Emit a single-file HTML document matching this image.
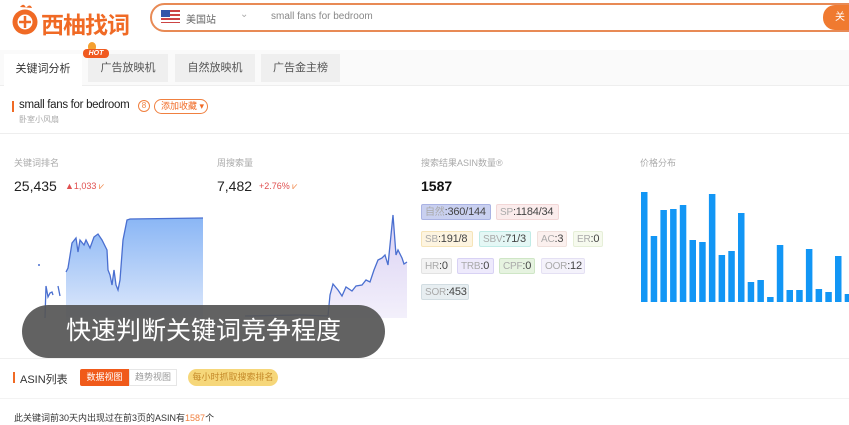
<!DOCTYPE html>
<html><head><meta charset="utf-8"><style>
*{margin:0;padding:0;box-sizing:border-box}
body{width:849px;height:425px;overflow:hidden;background:#fff;font-family:"Liberation Sans","Noto Sans CJK SC",sans-serif;position:relative;color:#333}
.a{position:absolute;white-space:nowrap}
.tag{position:absolute;height:16px;font-size:10px;line-height:14px;padding:0 3px;border-radius:2px;color:#555;white-space:nowrap;overflow:hidden;letter-spacing:-0.2px}
.tag b{font-weight:normal;color:#444;font-size:11px}
.tag span{color:#aaa}
</style></head><body>
<!-- header -->
<svg class="a" style="left:10px;top:2px" width="30" height="33" viewBox="0 0 30 33">
<path d="M10 5 Q14 0 16 6 Q20 1 22 6" fill="#f06a25"/>
<circle cx="15" cy="20" r="12.5" fill="#f06a25"/><circle cx="15" cy="20" r="7.5" fill="#fff"/>
<path d="M15 14v12M9 20h12" stroke="#f06a25" stroke-width="2.5"/></svg>
<div class="a" style="left:41px;top:6px;font-size:23px;font-weight:bold;color:#f06a25;letter-spacing:-1px">西柚找词</div>
<div class="a" style="left:150px;top:3px;width:720px;height:29px;border:2px solid #e88a55;border-radius:15px"></div>
<div class="a" style="left:161px;top:10px;width:19px;height:13px;background:repeating-linear-gradient(#c44 0 2px,#fff 2px 4px)"><div style="width:9px;height:7px;background:#35a"></div></div>
<div class="a" style="left:186px;top:11px;font-size:10px;color:#666">美国站</div>
<div class="a" style="left:240px;top:9px;font-size:10px;color:#aaa">⌄</div>
<div class="a" style="left:271px;top:11px;font-size:10px;color:#888">small fans for bedroom</div>
<div class="a" style="left:823px;top:5px;width:40px;height:25px;background:#f07a30;border-radius:12px;color:#fff;font-size:10px;line-height:25px;padding-left:12px">关</div>
<!-- tabs band -->
<div class="a" style="left:0;top:50px;width:849px;height:36px;background:#fafafa;border-bottom:1px solid #eee"></div>
<div class="a" style="left:4px;top:54px;width:78px;height:32px;background:#fff;font-size:11px;line-height:30px;text-align:center;color:#333">关键词分析</div>
<div class="a" style="left:88px;top:54px;width:80px;height:28px;background:#efefef;font-size:11px;line-height:28px;text-align:center;color:#555">广告放映机</div>
<div class="a" style="left:175px;top:54px;width:80px;height:28px;background:#efefef;font-size:11px;line-height:28px;text-align:center;color:#555">自然放映机</div>
<div class="a" style="left:261px;top:54px;width:79px;height:28px;background:#efefef;font-size:11px;line-height:28px;text-align:center;color:#555">广告金主榜</div>
<div class="a" style="left:88px;top:42px;width:8px;height:9px;background:#f5a030;border-radius:50% 50% 40% 40%"></div>
<div class="a" style="left:83px;top:49px;width:26px;height:9px;background:#f05a20;border-radius:4px;color:#fff;font-size:7px;font-style:italic;font-weight:bold;line-height:9px;text-align:center">HOT</div>
<!-- title -->
<div class="a" style="left:12px;top:101px;width:2px;height:11px;background:#f06a25"></div>
<div class="a" style="left:19px;top:99px;font-size:11.5px;color:#222;letter-spacing:-0.3px">small fans for bedroom</div>
<div class="a" style="left:138px;top:100px;width:12px;height:12px;border:1px solid #f08040;border-radius:50%;font-size:8px;color:#f08040;text-align:center;line-height:10px">8</div>
<div class="a" style="left:154px;top:99px;width:54px;height:15px;border:1px solid #f08040;border-radius:8px;font-size:9px;color:#f06a25;line-height:13px;padding-left:6px">添加收藏 ▾</div>
<div class="a" style="left:19px;top:114px;font-size:8px;color:#aaa">卧室小风扇</div>
<div class="a" style="left:0;top:133px;width:849px;height:1px;background:#eee"></div>
<!-- metrics -->
<div class="a" style="left:14px;top:156px;font-size:9px;color:#aaa">关键词排名</div>
<div class="a" style="left:14px;top:178px;font-size:14px;color:#222">25,435</div>
<div class="a" style="left:65px;top:181px;font-size:9px;color:#e05050">▲1,033 <span style="color:#f08040">⩗</span></div>
<div class="a" style="left:217px;top:156px;font-size:9px;color:#aaa">周搜索量</div>
<div class="a" style="left:217px;top:178px;font-size:14px;color:#222">7,482</div>
<div class="a" style="left:259px;top:181px;font-size:9px;color:#e05050">+2.76% <span style="color:#f08040">⩗</span></div>
<div class="a" style="left:421px;top:156px;font-size:9px;color:#aaa">搜索结果ASIN数量®</div>
<div class="a" style="left:421px;top:178px;font-size:14px;font-weight:bold;color:#111">1587</div>
<div class="a" style="left:640px;top:156px;font-size:9px;color:#aaa">价格分布</div>
<!-- charts -->
<svg class="a" style="left:0;top:0" width="849" height="425">
<defs><linearGradient id="g1" x1="0" y1="0" x2="0" y2="1"><stop offset="0" stop-color="#8ab6f5"/><stop offset="1" stop-color="#dfe9fb"/></linearGradient>
<linearGradient id="g2" x1="0" y1="0" x2="0" y2="1"><stop offset="0" stop-color="#d9d0f3"/><stop offset="1" stop-color="#f3f0fb"/></linearGradient></defs>
<path d="M66 272L68 268L72 243L76 238L78 252L80 240L84 245L86 240L90 248L94 237L98 234L102 240L107 250L108 270L110 275L112 285L114 270L116 285L118 290L120 280L123 240L127 220L130 219L203 218L203 320L66 320Z" fill="url(#g1)"/>
<polyline fill="none" stroke="#4a6fd0" stroke-width="1.3" points="66,272 68,268 72,243 76,238 78,252 80,240 84,245 86,240 90,248 94,237 98,234 102,240 107,250 108,270 110,275 112,285 114,270 116,285 118,290 120,280 123,240 127,220 130,219 203,218"/>
<polyline fill="none" stroke="#4a6fd0" stroke-width="1.3" points="45,318 46,286 48,297 50,293 52,292 53,295"/>
<polyline fill="none" stroke="#4a6fd0" stroke-width="1.3" points="58,286 60,296"/>
<circle cx="39" cy="265" r="1" fill="#4a6fd0"/>
<path d="M330 295L333 284L338 290L342 296L346 287L352 291L356 286L362 285L366 280L370 282L374 270L378 260L382 258L385 255L388 265L393 215L396 255L398 250L402 258L404 264L407 262L407 318L330 318Z" fill="url(#g2)"/>
<polyline fill="none" stroke="#4a6fd0" stroke-width="1.3" points="245,316 300,315 328,316 330,295 333,284 338,290 342,296 346,287 352,291 356,286 362,285 366,280 370,282 374,270 378,260 382,258 385,255 388,265 393,215 396,255 398,250 402,258 404,264 407,262"/>
<g fill="#1296f5">
<rect x="641" y="192" width="6.5" height="110"/><rect x="650.7" y="236" width="6.5" height="66"/><rect x="660.4" y="210" width="6.5" height="92"/><rect x="670.1" y="209" width="6.5" height="93"/><rect x="679.8" y="205" width="6.5" height="97"/><rect x="689.5" y="240" width="6.5" height="62"/><rect x="699.2" y="242" width="6.5" height="60"/><rect x="708.9" y="194" width="6.5" height="108"/><rect x="718.6" y="255" width="6.5" height="47"/><rect x="728.3" y="251" width="6.5" height="51"/><rect x="738" y="213" width="6.5" height="89"/><rect x="747.7" y="282" width="6.5" height="20"/><rect x="757.4" y="280" width="6.5" height="22"/><rect x="767.1" y="297" width="6.5" height="5"/><rect x="776.8" y="245" width="6.5" height="57"/><rect x="786.5" y="290" width="6.5" height="12"/><rect x="796.2" y="290" width="6.5" height="12"/><rect x="805.9" y="249" width="6.5" height="53"/><rect x="815.6" y="289" width="6.5" height="13"/><rect x="825.3" y="292" width="6.5" height="10"/><rect x="835" y="256" width="6.5" height="46"/><rect x="844.7" y="294" width="6.5" height="8"/>
</g></svg>
<!-- tags -->
<div class="tag" style="left:421px;top:204px;width:70px;background:#c9d0f0;border:1px solid #aab3e3"><span>自然</span><b>:360/144</b></div>
<div class="tag" style="left:496px;top:204px;width:63px;background:#fbecec;border:1px solid #f2d7d7"><span>SP</span><b>:1184/34</b></div>
<div class="tag" style="left:421px;top:231px;width:52px;background:#fdf4e0;border:1px solid #f6e4b8"><span>SB</span><b>:191/8</b></div>
<div class="tag" style="left:479px;top:231px;width:52px;background:#e4f7f5;border:1px solid #c0ebe6"><span>SBV</span><b>:71/3</b></div>
<div class="tag" style="left:537px;top:231px;width:30px;background:#fbf0ee;border:1px solid #f0e0dc"><span>AC</span><b>:3</b></div>
<div class="tag" style="left:573px;top:231px;width:30px;background:#f6faee;border:1px solid #e6efd8"><span>ER</span><b>:0</b></div>
<div class="tag" style="left:421px;top:258px;width:31px;background:#f3f3f3;border:1px solid #e2e2e2"><span>HR</span><b>:0</b></div>
<div class="tag" style="left:457px;top:258px;width:37px;background:#eeeafc;border:1px solid #d8d2f4"><span>TRB</span><b>:0</b></div>
<div class="tag" style="left:499px;top:258px;width:36px;background:#e6f3e0;border:1px solid #cfe6c6"><span>CPF</span><b>:0</b></div>
<div class="tag" style="left:541px;top:258px;width:44px;background:#f4f2fb;border:1px solid #e4e0f3"><span>OOR</span><b>:12</b></div>
<div class="tag" style="left:421px;top:284px;width:48px;background:#e7eef1;border:1px solid #d2dde2"><span>SOR</span><b>:453</b></div>
<!-- overlay caption -->
<div class="a" style="left:22px;top:305px;width:363px;height:53px;background:rgba(85,85,85,0.92);border-radius:27px;color:#fff;font-size:25px;line-height:53px;text-align:center">快速判断关键词竞争程度</div>
<div class="a" style="left:0;top:358px;width:849px;height:1px;background:#f0f0f0"></div>
<!-- asin -->
<div class="a" style="left:13px;top:372px;width:2px;height:11px;background:#f06a25"></div>
<div class="a" style="left:20px;top:371px;font-size:11px;color:#333">ASIN列表</div>
<div class="a" style="left:80px;top:369px;width:49px;height:17px;background:#f05a1a;color:#fff;font-size:9px;line-height:17px;text-align:center;border-radius:2px 0 0 2px">数据视图</div>
<div class="a" style="left:129px;top:369px;width:48px;height:17px;border:1px solid #e6e6e6;color:#999;font-size:9px;line-height:15px;text-align:center">趋势视图</div>
<div class="a" style="left:188px;top:369px;width:90px;height:17px;background:#f6d77a;color:#c58a2a;font-size:9px;line-height:17px;text-align:center;border-radius:9px">每小时抓取搜索排名</div>
<div class="a" style="left:0;top:398px;width:849px;height:1px;background:#f3f3f3"></div>
<div class="a" style="left:14px;top:411px;font-size:9px;color:#333">此关键词前30天内出现过在前3页的ASIN有<span style="color:#f08040">1587</span>个</div>
</body></html>
